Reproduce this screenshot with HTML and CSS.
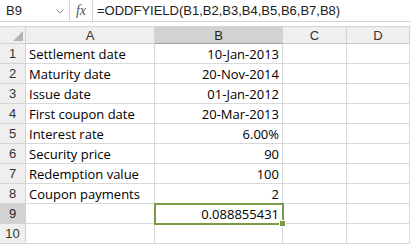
FILE: index.html
```html
<!DOCTYPE html>
<html>
<head>
<meta charset="utf-8">
<link rel="stylesheet" href="styles.css">
</head>
<body>
<div class="app">
  <div class="fbar">
    <div class="namebox"><span class="nb-text">B9</span>
      <svg class="chev" width="8" height="5" viewBox="0 0 8 5"><path d="M0.5 0.5 L4 4 L7.5 0.5" fill="none" stroke="#888" stroke-width="1"/></svg>
    </div>
    <div class="fx">fx</div>
    <div class="formula">=ODDFYIELD(B1,B2,B3,B4,B5,B6,B7,B8)</div>
  </div>
  <div class="gap"></div>
  <div class="sheet">
    <div class="h corner"><svg class="tri" width="10" height="10" viewBox="0 0 10 10"><path d="M10 0 L10 10 L0 10 Z" fill="#b4b4b4"/></svg></div>
    <div class="h col">A</div>
    <div class="h col sel">B</div>
    <div class="h col">C</div>
    <div class="h col">D</div>

    <div class="h row">1</div><div class="c">Settlement date</div><div class="c r">10-Jan-2013</div><div class="c"></div><div class="c"></div>
    <div class="h row">2</div><div class="c">Maturity date</div><div class="c r">20-Nov-2014</div><div class="c"></div><div class="c"></div>
    <div class="h row">3</div><div class="c">Issue date</div><div class="c r">01-Jan-2012</div><div class="c"></div><div class="c"></div>
    <div class="h row">4</div><div class="c">First coupon date</div><div class="c r">20-Mar-2013</div><div class="c"></div><div class="c"></div>
    <div class="h row">5</div><div class="c">Interest rate</div><div class="c r">6.00%</div><div class="c"></div><div class="c"></div>
    <div class="h row">6</div><div class="c">Security price</div><div class="c r">90</div><div class="c"></div><div class="c"></div>
    <div class="h row">7</div><div class="c">Redemption value</div><div class="c r">100</div><div class="c"></div><div class="c"></div>
    <div class="h row">8</div><div class="c">Coupon payments</div><div class="c r">2</div><div class="c"></div><div class="c"></div>
    <div class="h row rsel">9</div><div class="c"></div><div class="c r active">0.088855431<span class="handle"></span></div><div class="c"></div><div class="c"></div>
    <div class="h row">10</div><div class="c"></div><div class="c r"></div><div class="c"></div><div class="c"></div>
  </div>
</div>
</body>
</html>
```
FILE: styles.css
```css
html, body {
  margin: 0;
  padding: 0;
  background: #ffffff;
}
.app {
  width: 411px;
  height: 245px;
  overflow: hidden;
  background: #ffffff;
}
.fbar {
  display: flex;
  height: 22px;
  border-bottom: 1px solid #d4d4d4;
  box-sizing: border-box;
  background: #ffffff;
}
.namebox {
  width: 70px;
  box-sizing: border-box;
  border-right: 1px solid #d4d4d4;
  display: flex;
  align-items: center;
  justify-content: space-between;
  padding: 0 5px 0 6px;
  font-family: "Liberation Sans", Arial, sans-serif;
  font-size: 13px;
  color: #222;
}
.chev { margin-top: 1px; }
.fx {
  width: 23px;
  box-sizing: border-box;
  border-right: 1px solid #d4d4d4;
  display: flex;
  align-items: center;
  justify-content: center;
  font-family: "Liberation Serif", "Times New Roman", serif;
  font-style: italic;
  font-size: 14px;
  color: #555;
}
.formula {
  padding-left: 4px;
  display: flex;
  align-items: center;
  font-family: "Liberation Sans", Arial, sans-serif;
  font-size: 13px;
  color: #222;
}
.gap {
  height: 4px;
  background: #ffffff;
}
.sheet {
  display: grid;
  grid-template-columns: 26px 129px 128px 64px 63px;
  grid-template-rows: 17px repeat(10, 20px);
  font-family: "Open Sans", "Liberation Sans", sans-serif;
  font-size: 13px;
  color: #000;
  border-top: 1px solid #d4d4d4;
}
.h {
  background: #efefef;
  border-right: 1px solid #d4d4d4;
  border-bottom: 1px solid #d4d4d4;
  box-sizing: border-box;
  display: flex;
  align-items: center;
  justify-content: center;
  color: #333;
  font-family: "Liberation Sans", Arial, sans-serif;
  font-size: 13px;
}
.h.col { border-bottom-color: #c8c8c8; }
.h.sel {
  background: #d2d2d2;
  border-bottom: 1px solid #9f9f9f;
  color: #262626;
}
.h.rsel {
  background: #d2d2d2;
  color: #262626;
}
.h.row { justify-content: center; }
.corner {
  position: relative;
  justify-content: flex-end;
  align-items: flex-end;
  padding: 0 2px 2px 0;
}
.c {
  border-right: 1px solid #d9d9d9;
  border-bottom: 1px solid #d9d9d9;
  box-sizing: border-box;
  padding: 0 3px;
  display: flex;
  align-items: center;
  white-space: nowrap;
  overflow: visible;
}
.c.r { justify-content: flex-end; }
.active {
  position: relative;
  outline: 2px solid #7b9a45;
  outline-offset: -1px;
  z-index: 1;
}
.handle {
  position: absolute;
  right: -4px;
  bottom: -4px;
  width: 5px;
  height: 5px;
  background: #7b9a45;
  border: 1px solid #fff;
}
```
